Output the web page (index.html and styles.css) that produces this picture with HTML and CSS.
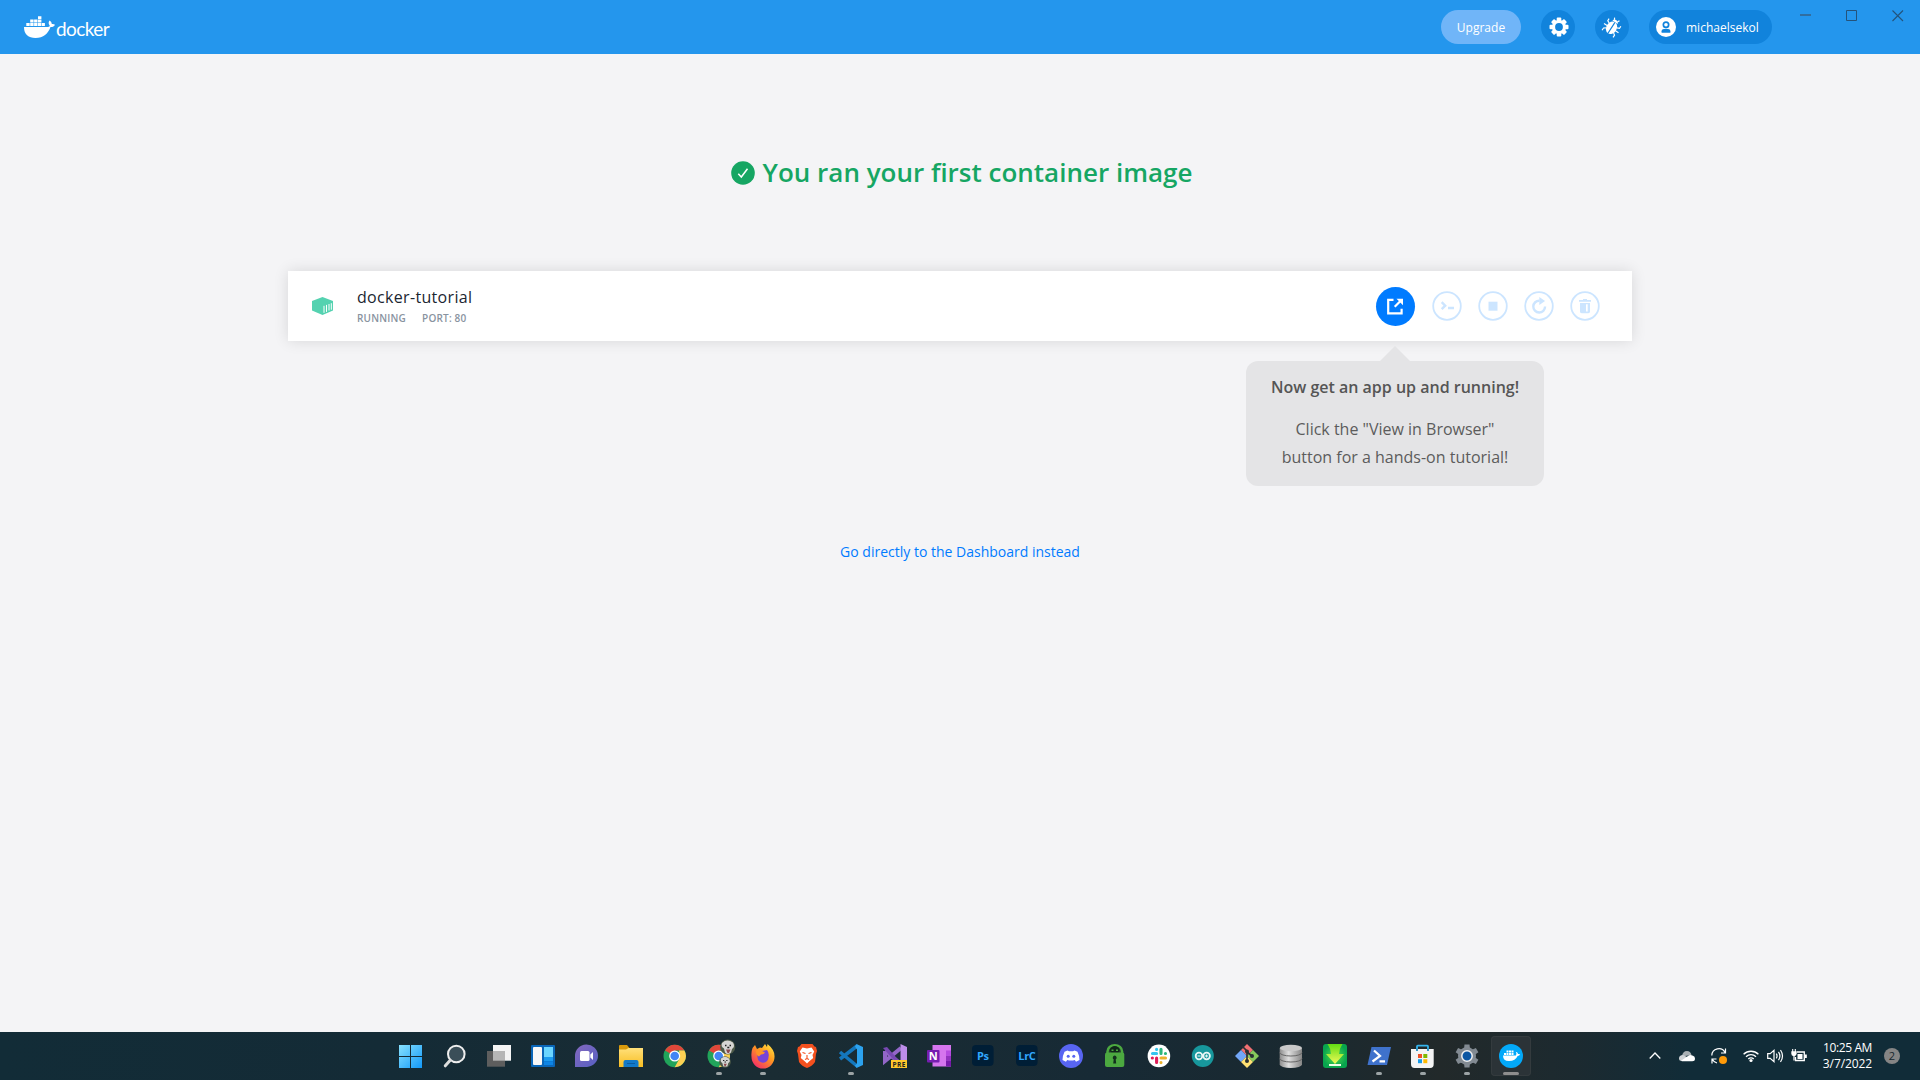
FILE: index.html
```html
<!DOCTYPE html>
<html lang="en">
<head>
<meta charset="utf-8">
<title>Docker Desktop</title>
<link rel="stylesheet" href="styles.css">
</head>
<body>
<header class="topbar">
  <div class="brand">
    <svg class="whale" width="31" height="22" viewBox="0 0 31 22" fill="#fff"><path d="M0 11h24c1.200 0 1.800-.4 1.700-1.400-1.400-1.700-1.300-3.600-.2-5.100 1.500.9 2.200 2 2.300 3.600 1.200-.2 2.300 0 3.200.6-.8 1.800-2.300 2.500-4.500 2.400C24 18 19.500 22 11.500 22 4.500 22 0 18.500 0 11z"/><path d="M2.300 7h3.400v3H2.300zM6.200 7h3.400v3H6.200zM10.100 7h3.400v3h-3.400zM14 7h3.400v3H14zM17.900 7h3v3h-3zM6.200 3.600h3.400v2.900H6.200zM10.100 3.600h3.400v2.900h-3.400zM14 3.600h3.400v2.900H14zM14 .2h3.400v2.900H14z"/></svg>
    <span class="wordmark">docker</span>
  </div>
  <div class="account">
    <button class="upgrade">Upgrade</button>
    <button class="round"><svg class="gear" width="20" height="20" viewBox="0 0 20 20"><g fill="#fff"><circle cx="10" cy="10" r="7"/><rect x="7.700" y=".5" width="4.600" height="19" rx="1"/><rect x=".5" y="7.700" width="19" height="4.600" rx="1"/><g transform="rotate(45 10 10)"><rect x="7.700" y=".8" width="4.600" height="18.400" rx="1"/><rect x=".8" y="7.700" width="18.400" height="4.600" rx="1"/></g></g><circle cx="10" cy="10" r="3.900" fill="#1183dc"/></svg></button>
    <button class="round"><svg width="20" height="20" viewBox="0 0 22 22"><g transform="rotate(33 11 11)"><ellipse cx="11" cy="12" rx="5.800" ry="7.200" fill="#fff"/><path d="M7.500 4.800a3.600 3.600 0 0 1 7 0z" fill="#fff"/><path d="M11 5v14.500" stroke="#1183dc" stroke-width="1.300"/><path d="M6 9 3.300 7.700V5M5.500 12.500H1.500M6 15.500l-2.200 1.500v3M16 9l2.700-1.300V5M16.500 12.500h4M16 15.500l2.200 1.500v3M9 3 7.800.8M13 3 14.200.8" fill="none" stroke="#fff" stroke-width="1.300"/></g></svg></button>
    <button class="user"><svg width="20" height="20" viewBox="0 0 20 20"><circle cx="10" cy="10" r="10" fill="#fff"/><circle cx="10" cy="7.700" r="3.500" fill="#1183dc"/><circle cx="10" cy="7.700" r="1.800" fill="#fff"/><path d="M5.600 15.700v-1.500c0-1.800 1.700-2.500 4.400-2.500s4.400.7 4.400 2.500v1.500z" fill="#1183dc"/></svg><span>michaelsekol</span></button>
  </div>
  <div class="winctl">
    <svg width="12" height="12" viewBox="0 0 12 12"><path d="M0 5h11" stroke="#35658c" stroke-width="1.600"/></svg>
    <svg width="12" height="12" viewBox="0 0 12 12"><path d="M.5.500h10v10H.5z" fill="none" stroke="#24537b"/></svg>
    <svg width="12" height="12" viewBox="0 0 12 12"><path d="M.5.500l10.500 10.500M11 .5.500 11" stroke="#24537b" stroke-width="1.100"/></svg>
  </div>
</header>

<main class="content">
  <h1 class="headline"><svg width="24" height="24" viewBox="0 0 24 24"><circle cx="12" cy="12" r="11.800" fill="#16a663"/><path d="M7.300 12.800l3 3.200 6.200-8.200" fill="none" stroke="#fff" stroke-width="1.500"/></svg><span>You ran your first container image</span></h1>

  <section class="card">
    <svg class="box" width="21" height="18" viewBox="0 0 21 18"><path d="M10.500 0 21 4v9.500L10.500 18 0 13.500V4z" fill="#54d2b0"/><path d="M12 8.800v7M14.500 7.900v7M17 7v6.500M19.300 6.200v6.500" stroke="#fff" stroke-width="1"/></svg>
    <div class="info">
      <div class="name">docker-tutorial</div>
      <div class="meta"><span>RUNNING</span><span>PORT: 80</span></div>
    </div>
    <div class="actions">
      <div class="open">
        <svg width="39" height="39" viewBox="0 0 39 39"><circle cx="19.500" cy="19.500" r="19.500" fill="#007bff"/><path d="M17.500 12.800h-5.300v13.500h13.400v-4.500" fill="none" stroke="#fff" stroke-width="2.200"/><path d="M18.700 19.700l6-6" stroke="#fff" stroke-width="2.200"/><path d="M20.500 11.700h6.500v6.600z" fill="#fff"/></svg>
        <div class="tip"><strong>Now get an app up and running!</strong><p>Click the "View in Browser"<br>button for a hands-on tutorial!</p></div>
      </div>
      <svg class="act" width="30" height="30" viewBox="0 0 30 30"><circle cx="15" cy="15" r="13.800"/><path class="thick" d="M9.700 11.200l3.500 3.500-3.500 3.500M16 17h6"/></svg>
      <svg class="act" width="30" height="30" viewBox="0 0 30 30"><circle cx="15" cy="15" r="13.800"/><path class="f" d="M10.500 10.700h9v9h-9z"/></svg>
      <svg class="act" width="30" height="30" viewBox="0 0 30 30"><circle cx="15" cy="15" r="13.800"/><path class="thick" d="M15.500 9.700a5.900 5.900 0 1 0 5.600 5.900"/><path class="f" d="M15.300 6l5.800 4-5.800 4z"/></svg>
      <svg class="act" width="30" height="30" viewBox="0 0 30 30"><circle cx="15" cy="15" r="13.800"/><path class="f" fill-rule="evenodd" d="M9 9h4V8h4v1h4v1.800H9zM10 12h10v8.500c0 1-.7 1.700-1.700 1.700h-6.600c-1 0-1.700-.7-1.700-1.700zm6 1.300v7.200h1.700v-7.200z"/></svg>
    </div>
  </section>

  <a class="skip">Go directly to the Dashboard instead</a>
</main>

<footer class="taskbar">
  <div class="apps">
    <div class="app"><svg viewBox="0 0 32 32"><defs><linearGradient id="st" x1="4" y1="5" x2="27" y2="28" gradientUnits="userSpaceOnUse"><stop stop-color="#88e2ff"/><stop offset="1" stop-color="#1298f8"/></linearGradient></defs><path fill="url(#st)" d="M4 5h11v11H4zM16 5h11v11H16zM4 17h11v11H4zM16 17h11v11H16z"/></svg></div>
    <div class="app"><svg viewBox="0 0 32 32"><circle cx="17.300" cy="14" r="8.300" fill="#3a4e58" stroke="#eee" stroke-width="2"/><path d="M11.200 20.300 6.300 25.800" stroke="#ddd" stroke-width="3" stroke-linecap="round"/></svg></div>
    <div class="app"><svg viewBox="0 0 32 32"><path fill="#f4f4f4" d="M10 5h18v15.700H10z"/><path fill="#5e5e5e" d="M4 11h18v15.700H4z"/><path fill="#b6b6b6" d="M10 11h12v9.700H10z"/></svg></div>
    <div class="app"><svg viewBox="0 0 32 32"><rect x="4" y="5" width="24" height="22" rx="1" fill="#0a66b8"/><rect x="6" y="7" width="9" height="18" rx="1" fill="#f7f7f7"/><rect x="17" y="7" width="9" height="10" fill="#6bd6ff"/><path fill="#1c9cf0" d="M17 17h9v4h-9z"/><path fill="#0d84e4" d="M17 21.300h9V25h-9z"/></svg></div>
    <div class="app"><svg viewBox="0 0 32 32"><defs><linearGradient id="ch" x2="1" y2="1"><stop stop-color="#8468bd"/><stop offset="1" stop-color="#5660c4"/></linearGradient></defs><path fill="url(#ch)" d="M4 27V16A11.500 11.300 0 1 1 16 27z"/><rect x="9" y="11" width="9.500" height="10" rx="1.500" fill="#fff"/><path fill="#fff" d="M19.300 14.500 22 12v8l-2.700-2.500z"/></svg></div>
    <div class="app"><svg viewBox="0 0 32 32"><defs><linearGradient id="fo" x2="0" y2="1"><stop stop-color="#ffe07a"/><stop offset="1" stop-color="#f8be22"/></linearGradient></defs><path fill="#d99a0c" d="M4 6q0-1 1-1h7l2.500 3H20v6H4z"/><path fill="url(#fo)" d="M4 9.500h7L13.500 8H28v19H4z"/><path fill="#1279c8" d="M8.500 27v-5q0-2 2-2h11q2 0 2 2v5z"/><path stroke="#0b5ca0" d="M12 23.500h8"/></svg></div>
    <div class="app"><svg viewBox="0 0 32 32"><g id="chrome"><circle cx="15.700" cy="16" r="11.200" fill="#21a45a"/><path fill="#df473a" d="M15.700 16 6 10.400A11.200 11.200 0 0 1 25.400 10.400H15.700z"/><path fill="#fdd053" d="M25.400 10.400A11.200 11.200 0 0 1 15.700 27.200L20.500 18.500l-.5-8.100z"/><circle cx="15.700" cy="16" r="5.500" fill="#fff"/><circle cx="15.700" cy="16" r="4.300" fill="#4285f4"/></g></svg></div>
    <div class="app on"><svg viewBox="0 0 32 32"><use href="#chrome"/><circle cx="24.700" cy="7" r="7.600" fill="#4d5a49"/><path fill="#d5d5d3" d="M19 3Q24-1.500 30 2.500q2.500 4-1 6.500l-1 3.500q-3.500 3-6 0l-1-4q-3.500-2-2-5.500z"/><path d="M22 5.500h1.500M26.500 5.500H28M24.300 7.500h2" stroke="#222" stroke-width="1.500"/><path fill="#8c4a4c" d="M23 9.500h4.500L26 13h-1.500z"/><circle cx="22" cy="22" r="5.800" fill="#4d5a49"/><path fill="#d5d5d3" d="M18 18.500q4-3.500 8 0 2 3-.7 4.500l-1 3.500h-4l-1-3.500q-2.500-1.500-1.300-4.500z"/><path d="M20 20.500h1.300M23.200 20.500h1.300M21.500 22h1.500" stroke="#222" stroke-width="1.200"/><path fill="#8c4a4c" d="M20.800 23.700h3l-1.200 2.500h-1z"/></svg></div>
    <div class="app on"><svg viewBox="0 0 32 32"><defs><linearGradient id="ff" x1="1" x2=".2" y2="1"><stop stop-color="#fff04a"/><stop offset=".45" stop-color="#ff9a1f"/><stop offset="1" stop-color="#f5286c"/></linearGradient></defs><path fill="url(#ff)" d="M5.500 8 8 5l2 4 3-1.500 2 .5 3-4 2 3 .5-3Q28 10 27.500 17A11.300 11.300 0 0 1 4.500 17Q4 12 5.500 8z"/><path fill="#7743d7" d="M10 13q2-2 5-2l5-1q2.500 3 1.500 7a5.500 5.500 0 0 1-11 .5z"/><path fill="#ff9226" d="M9 10.500q4-2 7 1l2 1q-1 2-4 2l-2 2q-3-1-3-6z"/></svg></div>
    <div class="app"><svg viewBox="0 0 32 32"><path fill="#f4501e" d="M10.500 4h11l2 2.500L25 7l1 4-1 3-1 8q-3 4.500-8 6-5-1.500-8-6l-1-8-1-3 1-4 1.500-.5z"/><path fill="#fff" d="M11.500 7.500 16 8.500l4.500-1 2.700 4-1.700 3.500.7 3-4.200 3.500-2 2-2-2-4.200-3.500.7-3-1.700-3.500z"/><path d="M11.500 12.500l3 1M20.500 12.500l-3 1M16 15v4M14 19.500l2-1 2 1" fill="none" stroke="#f4501e" stroke-width="1.100"/></svg></div>
    <div class="app on"><svg viewBox="0 0 32 32"><path d="M5 19 22 6M5 12l17 14" stroke="#1477bd" stroke-width="3.500"/><path fill="#2ca2ee" d="M21.500 4 28 7v18l-6.500 3-1.500-2.500 2-2V9.500l-2-3z"/></svg></div>
    <div class="app"><svg viewBox="0 0 32 32"><path d="M6 11v10l16-13M6 11l16 13" fill="none" stroke="#9366c8" stroke-width="4"/><path fill="#bd8eea" d="M21.500 4 28 7v18l-6.500 3z"/><path fill="#7849b3" d="M4 8 8 7l14 16v5z"/><path fill="#ffc72c" d="M12 20h16v8H12z"/><text x="20.200" y="26.600" text-anchor="middle" class="pre">PRE</text></svg></div>
    <div class="app"><svg viewBox="0 0 32 32"><path fill="#d575ee" d="M9.500 5H28v21.500H9.500z"/><path fill="#b64be0" d="M23 10.500h5V16h-5z"/><path fill="#9332bf" d="M23 16h5v5h-5z"/><path fill="#7719aa" d="M23 21h5v5.500h-5z"/><rect x="4" y="10" width="12.500" height="12.500" rx="1" fill="#761db0"/><text x="10.200" y="20" text-anchor="middle" class="note">N</text></svg></div>
    <div class="app"><svg viewBox="0 0 32 32"><rect x="5" y="5" width="21.600" height="21" rx="4" fill="#001e36"/><text x="15.900" y="19.600" text-anchor="middle" class="adobe">Ps</text></svg></div>
    <div class="app"><svg viewBox="0 0 32 32"><rect x="5" y="5" width="21.600" height="21" rx="4" fill="#001e36"/><text x="15.900" y="19.600" text-anchor="middle" class="adobe">LrC</text></svg></div>
    <div class="app"><svg viewBox="0 0 32 32"><circle cx="16" cy="16" r="12" fill="#5865f2"/><path fill="#fff" d="M12.500 10.500 14 11.300h4l1.500-.8 3 1.200q2 4 2 8.300l-3.500 1.700-1.200-1.700q-3.800 1-7.600 0L11 21.700 7.500 20q0-4.300 2-8.300z"/><circle cx="13.200" cy="16.300" r="1.500" fill="#5865f2"/><circle cx="18.800" cy="16.300" r="1.500" fill="#5865f2"/></svg></div>
    <div class="app"><svg viewBox="0 0 32 32"><path d="M8.500 15v-3.500a7.300 6.300 0 0 1 14.600 0V15" fill="#26402c" stroke="#4ca940" stroke-width="2.500"/><ellipse cx="15.800" cy="10" rx="4.800" ry="4" fill="#10261b"/><path fill="#4ca940" d="M12.500 9.500h2v1.500h-2zM17 9.500h2v1.500h-2z"/><rect x="6" y="12.500" width="19.300" height="14.500" rx="2" fill="#4ca940"/><path fill="#12301e" d="M15.700 15.500a2.200 2.200 0 0 1 1 4l.5 4h-3l.5-4a2.200 2.200 0 0 1 1-4z"/></svg></div>
    <div class="app"><svg viewBox="0 0 32 32"><circle cx="15.900" cy="15.900" r="11.300" fill="#fff"/><g stroke-width="3.100" stroke-linecap="round"><path stroke="#36c5f0" d="M13.600 9.300v.1M9.500 13.500h4.100"/><path stroke="#2eb67d" d="M18 9.300v4.100M22.400 13.500h.1"/><path stroke="#e01e5a" d="M9.300 18h.1M13.600 18v4.500"/><path stroke="#ecb22e" d="M18 18h4.500M18 22.500v.1"/></g></svg></div>
    <div class="app"><svg viewBox="0 0 32 32"><circle cx="15.800" cy="15.900" r="11" fill="#17979c"/><g fill="none" stroke="#e9f6f6" stroke-width="1.800"><circle cx="12" cy="16" r="3.300"/><circle cx="19.600" cy="16" r="3.300"/></g><path d="M10.500 16h3M18 16h3M19.600 14.500v3" stroke="#e9f6f6"/></svg></div>
    <div class="app"><svg viewBox="0 0 32 32"><path fill="#f06f72" d="m16 4 6 6-6 6-6-6z"/><path fill="#72a6f7" d="m10 10 6 6-6 6-6-6z"/><path fill="#86c95c" d="m22 10 6 6-6 6-6-6z"/><path fill="#ffe173" d="m16 16 6 6-6 6-6-6z"/><path d="M11.500 6.500 16 11v11M16 12l5 4" fill="none" stroke="#293033" stroke-width="1.700"/><g fill="#293033"><circle cx="16" cy="11.500" r="2"/><circle cx="16" cy="21" r="2"/><circle cx="21" cy="16" r="2"/></g></svg></div>
    <div class="app"><svg viewBox="0 0 32 32"><defs><linearGradient id="db" x2="1"><stop stop-color="#8d8d8d"/><stop offset=".4" stop-color="#dedede"/><stop offset="1" stop-color="#858585"/></linearGradient></defs><path fill="url(#db)" d="M4.700 8v16.500a11.100 3.500 0 0 0 22.300 0V8z"/><ellipse cx="15.900" cy="8" rx="11.100" ry="3.300" fill="#c9c9c9"/><path d="M4.700 12.500a11.100 3.500 0 0 0 22.300 0M4.700 18.500a11.100 3.500 0 0 0 22.300 0" fill="none" stroke="#666"/></svg></div>
    <div class="app"><svg viewBox="0 0 32 32"><defs><radialGradient id="dl"><stop stop-color="#56e34a"/><stop offset="1" stop-color="#08a44e"/></radialGradient><linearGradient id="da" x2="0" y2="1"><stop stop-color="#61dc13"/><stop offset="1" stop-color="#f0fb58"/></linearGradient></defs><rect x="4" y="4" width="24" height="24" rx="3" fill="url(#dl)"/><path fill="url(#da)" d="M8.500 4h15q-3.500 5-3.500 10h5L16 24 7 14h5q0-5-3.500-10z"/><path d="M10 25h12" stroke="#efffe8" stroke-width="2"/></svg></div>
    <div class="app on"><svg viewBox="0 0 32 32"><path fill="#3f72cc" d="M8.500 7H28l-4 18H4.500z"/><path d="M11 10.500l6 5.500-7.500 5.500M16.500 21.300h5.500" fill="none" stroke="#fff" stroke-width="2.200"/></svg></div>
    <div class="app on"><svg viewBox="0 0 32 32"><path d="M10 10.500V6.500q0-.8.800-.8h9.400q.8 0 .8.800v4" fill="none" stroke="#36b5ee" stroke-width="1.800"/><path fill="#f4f4f4" d="M4 9h22.700v15q0 4-3.500 4H7.500Q4 28 4 24z"/><path fill="#f05125" d="M11 14h4v4h-4z"/><path fill="#7fba00" d="M16.300 14h4v4h-4z"/><path fill="#159bea" d="M11 19.200h4v4h-4z"/><path fill="#ffb900" d="M16.300 19.200h4v4h-4z"/><path d="M10 11V8.500M21 11V8.500" stroke="#1684bb" stroke-width="1.700"/></svg></div>
    <div class="app on"><svg viewBox="0 0 32 32"><g fill="#828a92"><circle cx="16" cy="16" r="9"/><path d="M13 9 13.500 4.500h5L19 9v14l-.5 4.500h-5L13 23z"/><path transform="rotate(60 16 16)" d="M13 9 13.500 4.300h5L19 9v14l-.5 4.700h-5L13 23z"/><path transform="rotate(120 16 16)" d="M13 9 13.500 4.300h5L19 9v14l-.5 4.700h-5L13 23z"/></g><circle cx="16" cy="16" r="5.200" fill="#0b56a3" stroke="#f0f0f0" stroke-width="1.500"/></svg></div>
    <div class="app on active"><svg viewBox="0 0 32 32"><circle cx="16" cy="16" r="12" fill="#03a9f9"/><path fill="#fff" d="M8 15.500h13q1-2-.3-3.700 2 .2 2.400 2.200 1-.3 2 .2-.6 1.700-2.500 1.800Q20.500 21 14 21q-6 0-6-5.500zM9 13h2v2H9zM11.500 13h2v2h-2zM14 13h2v2h-2zM16.500 13h2v2h-2zM11.500 10.500h2v2h-2zM14 10.500h2v2h-2zM16.500 10.500h2v2h-2z"/></svg></div>
  </div>
  <div class="tray">
    <svg class="chev" width="12" height="16" viewBox="0 0 12 16"><path d="M.7 10.500 6 5l5.300 5.500" fill="none" stroke="#fff" stroke-width="1.300"/></svg>
    <svg class="cloud" width="16" height="16" viewBox="0 0 16 16"><path fill="#a9b0b4" d="M3 8.500Q3.500 3 8 3q3.500 0 4.500 4z"/><path fill="#cfd3d6" d="M0 10.500Q0 7 4 7l6 3-4 3H3Q0 13 0 10.500z"/><path fill="#fff" d="M2 12.700 9 8q2-2 5-.2 2 .7 2 3 0 2.500-2.800 2.500H3z"/></svg>
    <svg class="sync" width="16" height="16" viewBox="0 0 16 16"><path d="M.8 7.500A7 7 0 0 1 14 4.500M14.500.5V5H10M1 15.500V11h4.500M1.500 11.500Q3 14.500 6 15" fill="none" stroke="#fff" stroke-width="1.200"/><circle cx="12" cy="12" r="4" fill="#ff9b09"/></svg>
    <svg class="wifi" width="16" height="16" viewBox="0 0 16 16"><g fill="none" stroke="#fff" stroke-width="1.300"><path d="M.6 6.300a10.500 10.500 0 0 1 14.800 0M3 8.800a7 7 0 0 1 10 0M5.300 11a3.800 3.800 0 0 1 5.400 0"/></g><circle cx="8" cy="12.500" r="1.600" fill="#fff"/></svg>
    <svg class="vol" width="16" height="16" viewBox="0 0 16 16" fill="none" stroke="#fff" stroke-width="1.200"><path d="M.7 5.700h2.500L7 2.300v11.400l-3.800-3.400H.7zM9.300 5.700q1.500 2.300 0 4.600M11.500 3.800q2.800 4.200 0 8.400M13.500 2q4 6 0 12"/></svg>
    <svg class="batt" width="16" height="16" viewBox="0 0 16 16"><path d="M6 4h7.300v8.500H4.500V9" fill="none" stroke="#fff" stroke-width="1.300"/><path fill="#fff" d="M6.500 6h5v5h-5zM14 6.500h1.800v3.500H14zM.3 3.300h5.400v2.500Q5 8 3.600 8v4.500H2.400V8Q.5 8 .3 5.800z"/><path d="M1.700 1v3M4.300 1v3" stroke="#fff" stroke-width="1.100"/></svg>
    <div class="clock"><span>10:25 AM</span><span class="date">3/7/2022</span></div>
    <div class="count">2</div>
  </div>
</footer>
</body>
</html>
```
FILE: styles.css
```css
* { box-sizing: border-box; }
body {
  margin: 0;
  width: 1920px;
  height: 1080px;
  overflow: hidden;
  display: flex;
  flex-direction: column;
  background: #f4f4f6;
  font-family: "Open Sans", sans-serif;
}
svg { display: block; flex: none; overflow: visible; }
button { border: 0; margin: 0; padding: 0; font: inherit; color: #fff; }

.topbar {
  height: 54px;
  flex: none;
  background: #2496ed;
  display: flex;
  align-items: flex-start;
  padding: 10px 16px 0 24px;
}
.brand { display: flex; gap: 1px; padding-top: 6px; }
.wordmark { color: #fff; font: 400 19px/22px Lato, sans-serif; letter-spacing: -.6px; padding-top: 2px; }
.account { margin-left: auto; display: flex; gap: 20px; font-size: 12px; }
.upgrade { width: 80px; height: 34px; border-radius: 17px; background: #70b5f8; }
.round { width: 34px; height: 34px; border-radius: 50%; background: #1183dc; display: flex; align-items: center; justify-content: center; }
.gear { margin-left: 1px; }
.user { width: 123px; height: 34px; border-radius: 17px; background: #1183dc; display: flex; align-items: center; gap: 10px; padding-left: 7px; }
.winctl { display: flex; gap: 34px; margin-left: 28px; }

.content { flex: 1; display: flex; flex-direction: column; align-items: center; }
.headline { margin: 98px 0 0 3px; height: 40px; display: flex; align-items: center; gap: 8px; color: #16a663; font-size: 26px; font-weight: 600; line-height: 40px; white-space: nowrap; }
.headline svg { margin-top: 2px; }

.card {
  width: 1344px;
  height: 70px;
  margin-top: 79px;
  padding: 0 32px 0 24px;
  background: #fff;
  box-shadow: 0 0 14px rgba(0, 0, 0, .12);
  display: flex;
  align-items: center;
}
.info { margin: 0 0 2px 24px; }
.name { font-size: 16px; line-height: 24px; letter-spacing: .32px; color: #1b2631; }
.meta { display: flex; gap: 16px; font-size: 10px; line-height: 14px; font-weight: 600; letter-spacing: .2px; color: #8993a0; margin-top: 2px; }
.actions { margin-left: auto; display: flex; align-items: center; gap: 16px; }
.open { position: relative; margin-right: 1px; }
.act { fill: none; stroke: #cce5ff; stroke-width: 1.8px; }
.act .thick { stroke-width: 2.400px; }
.act .f { fill: #cce5ff; stroke: none; }
.tip {
  position: absolute;
  top: 74px;
  left: -130px;
  width: 298px;
  height: 125px;
  padding: 12px 0;
  border-radius: 12px;
  background: #e4e4e6;
  color: #555;
  text-align: center;
  font-size: 16px;
  line-height: 28px;
  white-space: nowrap;
}
.tip::before {
  content: "";
  position: absolute;
  top: -15px;
  left: 134px;
  border: 15px solid transparent;
  border-top: 0;
  border-bottom-color: #e4e4e6;
}
.tip strong { font-weight: 600; }
.tip p { margin: 14px 0 0; color: #5c5c5c; }
.skip { margin-top: 201px; font-size: 14px; line-height: 20px; color: #007bff; }

.taskbar {
  height: 48px;
  flex: none;
  display: flex;
  background: linear-gradient(90deg, #122c37 0, #142b36 20%, #1a2c33 40%, #172a35 57%, #1a2930 68%, #22292a 75%, #1c2a30 82%, #112c38 88%, #112c38 100%);
}
.apps { display: flex; margin-left: 389px; }
.app { width: 44px; height: 48px; display: flex; flex-direction: column; align-items: center; padding-top: 8px; }
.app svg { width: 32px; height: 32px; }
.on::after { content: ""; width: 6px; height: 3px; border-radius: 2px; background: #9ca3a5; }
.active { width: 40px; height: 40px; margin: 4px 2px; padding-top: 4px; border-radius: 4px; background: #2b3337; box-shadow: inset 0 0 0 1px #343b3e; }
.active::after { width: 16px; background: #8e8e8e; }
.pre { font: 700 6.500px "Open Sans", sans-serif; fill: #222; letter-spacing: .4px; }
.note { font: 700 11px "Open Sans", sans-serif; fill: #fff; }
.adobe { font: 700 11px "Open Sans", sans-serif; letter-spacing: -.3px; fill: #31a8ff; }

.tray { margin-left: auto; display: flex; align-items: center; padding-right: 20px; color: #fff; }
.cloud { margin-left: 18px; }
.sync { margin-left: 16px; }
.wifi { margin-left: 16px; }
.vol { margin-left: 8px; }
.batt { margin-left: 8px; }
.clock { width: 65px; display: flex; flex-direction: column; align-items: flex-end; font-size: 12px; line-height: 16px; letter-spacing: -.4px; white-space: nowrap; }
.date { letter-spacing: -.1px; }
.count { width: 16px; height: 16px; margin-left: 12px; border-radius: 50%; background: #858585; color: #16252d; font-size: 11px; line-height: 16px; text-align: center; }
```
